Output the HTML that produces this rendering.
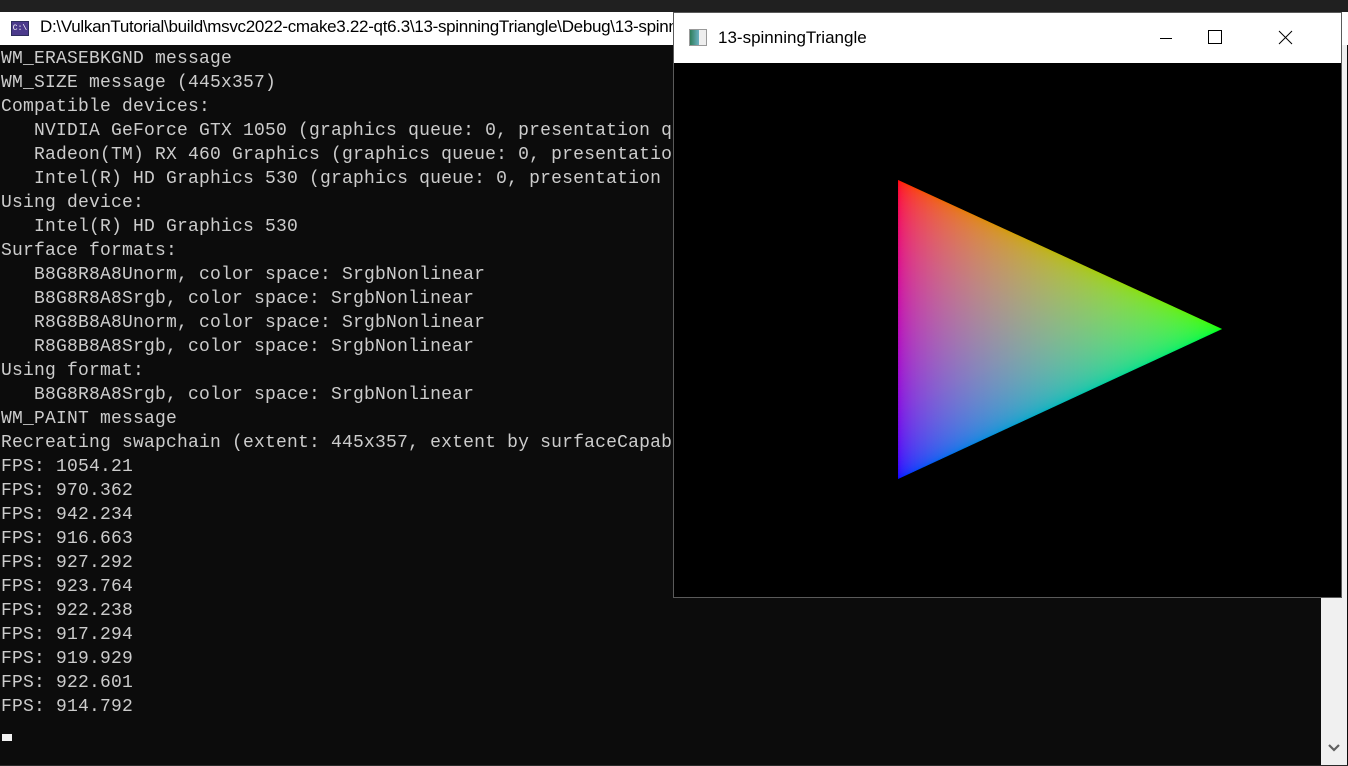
<!DOCTYPE html>
<html><head><meta charset="utf-8"><style>
*{margin:0;padding:0;box-sizing:border-box}
body{width:1348px;height:766px;overflow:hidden;background:#1b1b1b;position:relative;font-family:"Liberation Sans",sans-serif}
#top{position:absolute;left:0;top:0;width:1348px;height:12px;background:#202020}
#ctitle{position:absolute;left:0;top:12px;width:1348px;height:33px;background:#fff;font-size:17px;color:#000}
#ctitle .ic{position:absolute;left:11px;top:9px;width:18px;height:15px;background:#4b3a8c;border:1px solid #2e2e5e;color:#fff;font-size:8px;line-height:13px;text-align:center;font-family:"Liberation Mono",monospace}
#ctitle .t{position:absolute;left:40px;top:5px;white-space:nowrap;letter-spacing:-0.3px}
#con{position:absolute;left:0;top:47px;width:1348px;height:718px;background:#0c0c0c;color:#cccccc;font-family:"Liberation Mono",monospace;font-size:18px;line-height:24px;white-space:pre;letter-spacing:0.2px;padding-left:1px}
#conbg{position:absolute;left:0;top:45px;width:1348px;height:4px;background:#0c0c0c}
#sb{position:absolute;left:1321px;top:45px;width:26px;height:720px;background:#f0f0f0}
#sb svg{position:absolute;left:7px;top:698px}
#cur{position:absolute;left:2px;top:734px;width:10px;height:7px;background:#f2f2f2}
#bot{position:absolute;left:0;top:765px;width:1348px;height:1px;background:#2a2a2a}
#win{position:absolute;left:673px;top:12px;width:669px;height:586px;background:#000;border:1px solid #5a5a5a}
#wt{position:absolute;left:0;top:0;width:667px;height:50px;background:#fff}
#wt .t{position:absolute;left:44px;top:15px;font-size:17px;color:#000}
#wt .ic{position:absolute;left:15px;top:16px;width:18px;height:17px;border:1px solid #999;background:linear-gradient(90deg,#2f7d5a 0,#6ab0c0 55%,#eee 55%)}
</style></head><body>
<div id="top"></div>
<div id="ctitle"><div class="ic">C:\</div><div class="t">D:\VulkanTutorial\build\msvc2022-cmake3.22-qt6.3\13-spinningTriangle\Debug\13-spinningTriangle.exe</div></div>
<div id="conbg"></div>
<div id="con">WM_ERASEBKGND message
WM_SIZE message (445x357)
Compatible devices:
   NVIDIA GeForce GTX 1050 (graphics queue: 0, presentation queue: 0)
   Radeon(TM) RX 460 Graphics (graphics queue: 0, presentation queue: 0)
   Intel(R) HD Graphics 530 (graphics queue: 0, presentation queue: 0)
Using device:
   Intel(R) HD Graphics 530
Surface formats:
   B8G8R8A8Unorm, color space: SrgbNonlinear
   B8G8R8A8Srgb, color space: SrgbNonlinear
   R8G8B8A8Unorm, color space: SrgbNonlinear
   R8G8B8A8Srgb, color space: SrgbNonlinear
Using format:
   B8G8R8A8Srgb, color space: SrgbNonlinear
WM_PAINT message
Recreating swapchain (extent: 445x357, extent by surfaceCapabilities: 445x357)
FPS: 1054.21
FPS: 970.362
FPS: 942.234
FPS: 916.663
FPS: 927.292
FPS: 923.764
FPS: 922.238
FPS: 917.294
FPS: 919.929
FPS: 922.601
FPS: 914.792</div>
<div id="sb"><svg width="12" height="10" viewBox="0 0 12 10"><path d="M1 2 L6 7 L11 2" stroke="#606060" stroke-width="2.2" fill="none"/></svg></div>
<div id="cur"></div>
<div id="bot"></div>
<div id="win">
 <div id="wt"><div class="ic"></div><div class="t">13-spinningTriangle</div>
  <svg style="position:absolute;left:480px;top:15px" width="180" height="20">
   <path d="M6 10.5 H18" stroke="#000" stroke-width="1"/>
   <rect x="54.5" y="2.5" width="13" height="13" fill="none" stroke="#000" stroke-width="1"/>
   <path d="M125 3 L138 16 M138 3 L125 16" stroke="#000" stroke-width="1"/>
  </svg>
 </div>
 <svg style="position:absolute;left:-674px;top:-13px" width="1348" height="766">
  <defs>
   <linearGradient id="r" gradientUnits="userSpaceOnUse" x1="898" y1="180" x2="1012" y2="426"><stop offset="0" stop-color="#ff0000"/><stop offset="1" stop-color="#000"/></linearGradient>
   <linearGradient id="g" gradientUnits="userSpaceOnUse" x1="1222" y1="329" x2="898" y2="329"><stop offset="0" stop-color="#00ff00"/><stop offset="1" stop-color="#000"/></linearGradient>
   <linearGradient id="b" gradientUnits="userSpaceOnUse" x1="898" y1="479" x2="1011" y2="232"><stop offset="0" stop-color="#0000ff"/><stop offset="1" stop-color="#000"/></linearGradient>
   <filter id="gam" color-interpolation-filters="sRGB" x="0" y="0" width="100%" height="100%">
    <feComponentTransfer>
     <feFuncR type="gamma" amplitude="1" exponent="0.4545" offset="0"/>
     <feFuncG type="gamma" amplitude="1" exponent="0.4545" offset="0"/>
     <feFuncB type="gamma" amplitude="1" exponent="0.4545" offset="0"/>
    </feComponentTransfer>
   </filter>
  </defs>
  <g filter="url(#gam)">
  <g style="isolation:isolate">
   <polygon points="898,180 1222,329 898,479" fill="url(#r)"/>
   <polygon points="898,180 1222,329 898,479" fill="url(#g)" style="mix-blend-mode:plus-lighter"/>
   <polygon points="898,180 1222,329 898,479" fill="url(#b)" style="mix-blend-mode:plus-lighter"/>
  </g>
  </g>
 </svg>
</div>
</body></html>
